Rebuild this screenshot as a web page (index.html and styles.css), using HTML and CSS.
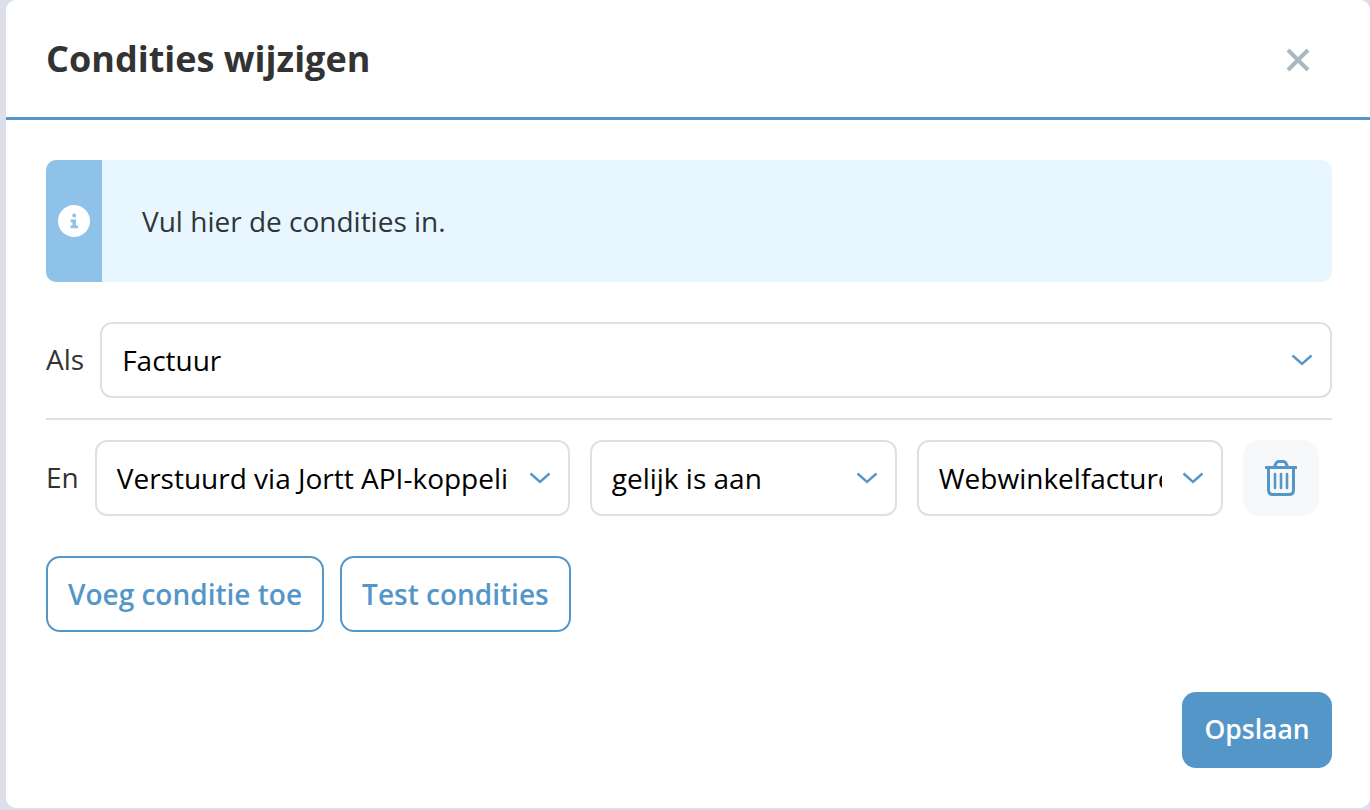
FILE: index.html
```html
<!DOCTYPE html>
<html lang="nl">
<head>
  <meta charset="UTF-8">
  <title>Condities wijzigen</title>
  <link rel="stylesheet" href="styles.css">
</head>
<body>
  <div class="modal">
    <div class="modal-header">
      <h1>Condities wijzigen</h1>
      <svg class="close" width="24" height="24" viewBox="0 0 24 24"><path d="M2 2 L22 22 M22 2 L2 22" stroke="#a9b8bf" stroke-width="4" fill="none"/></svg>
    </div>
    <div class="modal-body">
      <div class="alert">
        <div class="alert-icon">
          <svg width="32" height="32" viewBox="0 0 32 32">
            <circle cx="16" cy="16" r="16" fill="#fff"/>
            <circle cx="16.2" cy="10.6" r="2" fill="#8fc2e8"/>
            <path d="M12.5 14.5 h5.5 v6 h2 v2.8 h-7.5 v-2.8 h2 v-3.2 h-2 z" fill="#8fc2e8"/>
          </svg>
        </div>
        <div class="alert-text">Vul hier de condities in.</div>
      </div>

      <div class="row row-als">
        <label>Als</label>
        <div class="select select-full">
          <span>Factuur</span>
          <svg width="22" height="12" viewBox="0 0 22 12"><path d="M1.5 1.5 L11 10 L20.5 1.5" stroke="#5596c9" stroke-width="2.4" fill="none"/></svg>
        </div>
      </div>

      <div class="row row-en">
        <label>En</label>
        <div class="select select-a">
          <span>Verstuurd via Jortt API-koppeling</span>
          <svg width="22" height="12" viewBox="0 0 22 12"><path d="M1.5 1.5 L11 10 L20.5 1.5" stroke="#5596c9" stroke-width="2.4" fill="none"/></svg>
        </div>
        <div class="select select-b">
          <span>gelijk is aan</span>
          <svg width="22" height="12" viewBox="0 0 22 12"><path d="M1.5 1.5 L11 10 L20.5 1.5" stroke="#5596c9" stroke-width="2.4" fill="none"/></svg>
        </div>
        <div class="select select-c">
          <span>Webwinkelfacturen</span>
          <svg width="22" height="12" viewBox="0 0 22 12"><path d="M1.5 1.5 L11 10 L20.5 1.5" stroke="#5596c9" stroke-width="2.4" fill="none"/></svg>
        </div>
        <button class="btn-delete">
          <svg width="32" height="36" viewBox="0 0 32 36" fill="none" stroke="#5596c9">
            <path d="M1 7.5 H31" stroke-width="3" stroke-linecap="round"/>
            <path d="M9.5 6.5 L11.5 2.5 Q12.2 1.5 13.6 1.5 H18.4 Q19.8 1.5 20.5 2.5 L22.5 6.5" stroke-width="3"/>
            <path d="M3.5 8 V30 Q3.5 34.5 8 34.5 H24 Q28.5 34.5 28.5 30 V8" stroke-width="3"/>
            <path d="M10 14 V28 M16 14 V28 M22 14 V28" stroke-width="2.6" stroke-linecap="round"/>
          </svg>
        </button>
      </div>

      <div class="actions">
        <button class="btn-outline">Voeg conditie toe</button>
        <button class="btn-outline">Test condities</button>
      </div>

      <div class="footer">
        <button class="btn-primary">Opslaan</button>
      </div>
    </div>
  </div>
</body>
</html>
```

FILE: styles.css
```css
html, body {
  height: 100%;
}

body {
  margin: 0;
  background-color: #dcdfea;
  font-family: "Open Sans", sans-serif;
  overflow: hidden;
}

.modal {
  margin-left: 6px;
  height: 808px;
  background-color: #fff;
  border-radius: 10px;
  box-sizing: border-box;
}

.modal-header {
  height: 120px;
  box-sizing: border-box;
  border-bottom: 3px solid #5596c9;
  display: flex;
  align-items: center;
  justify-content: space-between;
  padding: 0 60px 0 40px;
}

.modal-header h1 {
  margin: 0;
  font-size: 36px;
  font-weight: 700;
  color: #333;
}

.close {
  margin-top: 3px;
}

.modal-body {
  padding: 40px 38px 0 40px;
}

.alert {
  display: flex;
  height: 122px;
  background-color: #e8f7ff;
  border-radius: 10px;
  overflow: hidden;
}

.alert-icon {
  width: 56px;
  background-color: #8fc2e8;
  display: flex;
  align-items: center;
  justify-content: center;
}

.alert-text {
  padding-left: 40px;
  display: flex;
  align-items: center;
  font-size: 28px;
  color: #2f3538;
}

.row {
  display: flex;
  align-items: center;
}

.row label {
  font-size: 28px;
  color: #333;
  padding-bottom: 2px;
}

.row-als {
  margin-top: 40px;
  padding-bottom: 20px;
  border-bottom: 2px solid #e0e0e0;
  gap: 16px;
}

.row-en {
  margin-top: 20px;
  gap: 20px;
}

.row-en label {
  margin-right: -4px;
}

.select {
  height: 76px;
  box-sizing: border-box;
  border: 2px solid #e0e0e0;
  border-radius: 12px;
  background-color: #fff;
  display: flex;
  align-items: center;
  font-size: 28px;
  color: #000;
  padding-left: 20px;
  padding-right: 17px;
  gap: 20px;
}

.select span {
  flex: 1;
  overflow: hidden;
  white-space: nowrap;
}

.select svg {
  flex-shrink: 0;
}

.select-full {
  flex: 1;
}

.select-a {
  width: 475px;
}

.select-b {
  width: 307px;
}

.select-c {
  width: 306px;
}

.btn-delete {
  width: 76px;
  height: 76px;
  border: none;
  border-radius: 16px;
  background-color: #f6f8fa;
  display: flex;
  align-items: center;
  justify-content: center;
  padding: 0;
}

.actions {
  margin-top: 40px;
  display: flex;
  gap: 16px;
}

.btn-outline {
  height: 76px;
  padding: 0 20px;
  font-family: inherit;
  font-size: 28px;
  font-weight: 600;
  color: #5596c9;
  background-color: #fff;
  border: 2px solid #5596c9;
  border-radius: 14px;
}

.footer {
  margin-top: 60px;
  display: flex;
  justify-content: flex-end;
}

.btn-primary {
  width: 150px;
  height: 76px;
  padding: 0 0 2px;
  font-family: inherit;
  font-size: 26.5px;
  font-weight: 600;
  color: #fff;
  background-color: #5596c9;
  border: none;
  border-radius: 14px;
}
```
